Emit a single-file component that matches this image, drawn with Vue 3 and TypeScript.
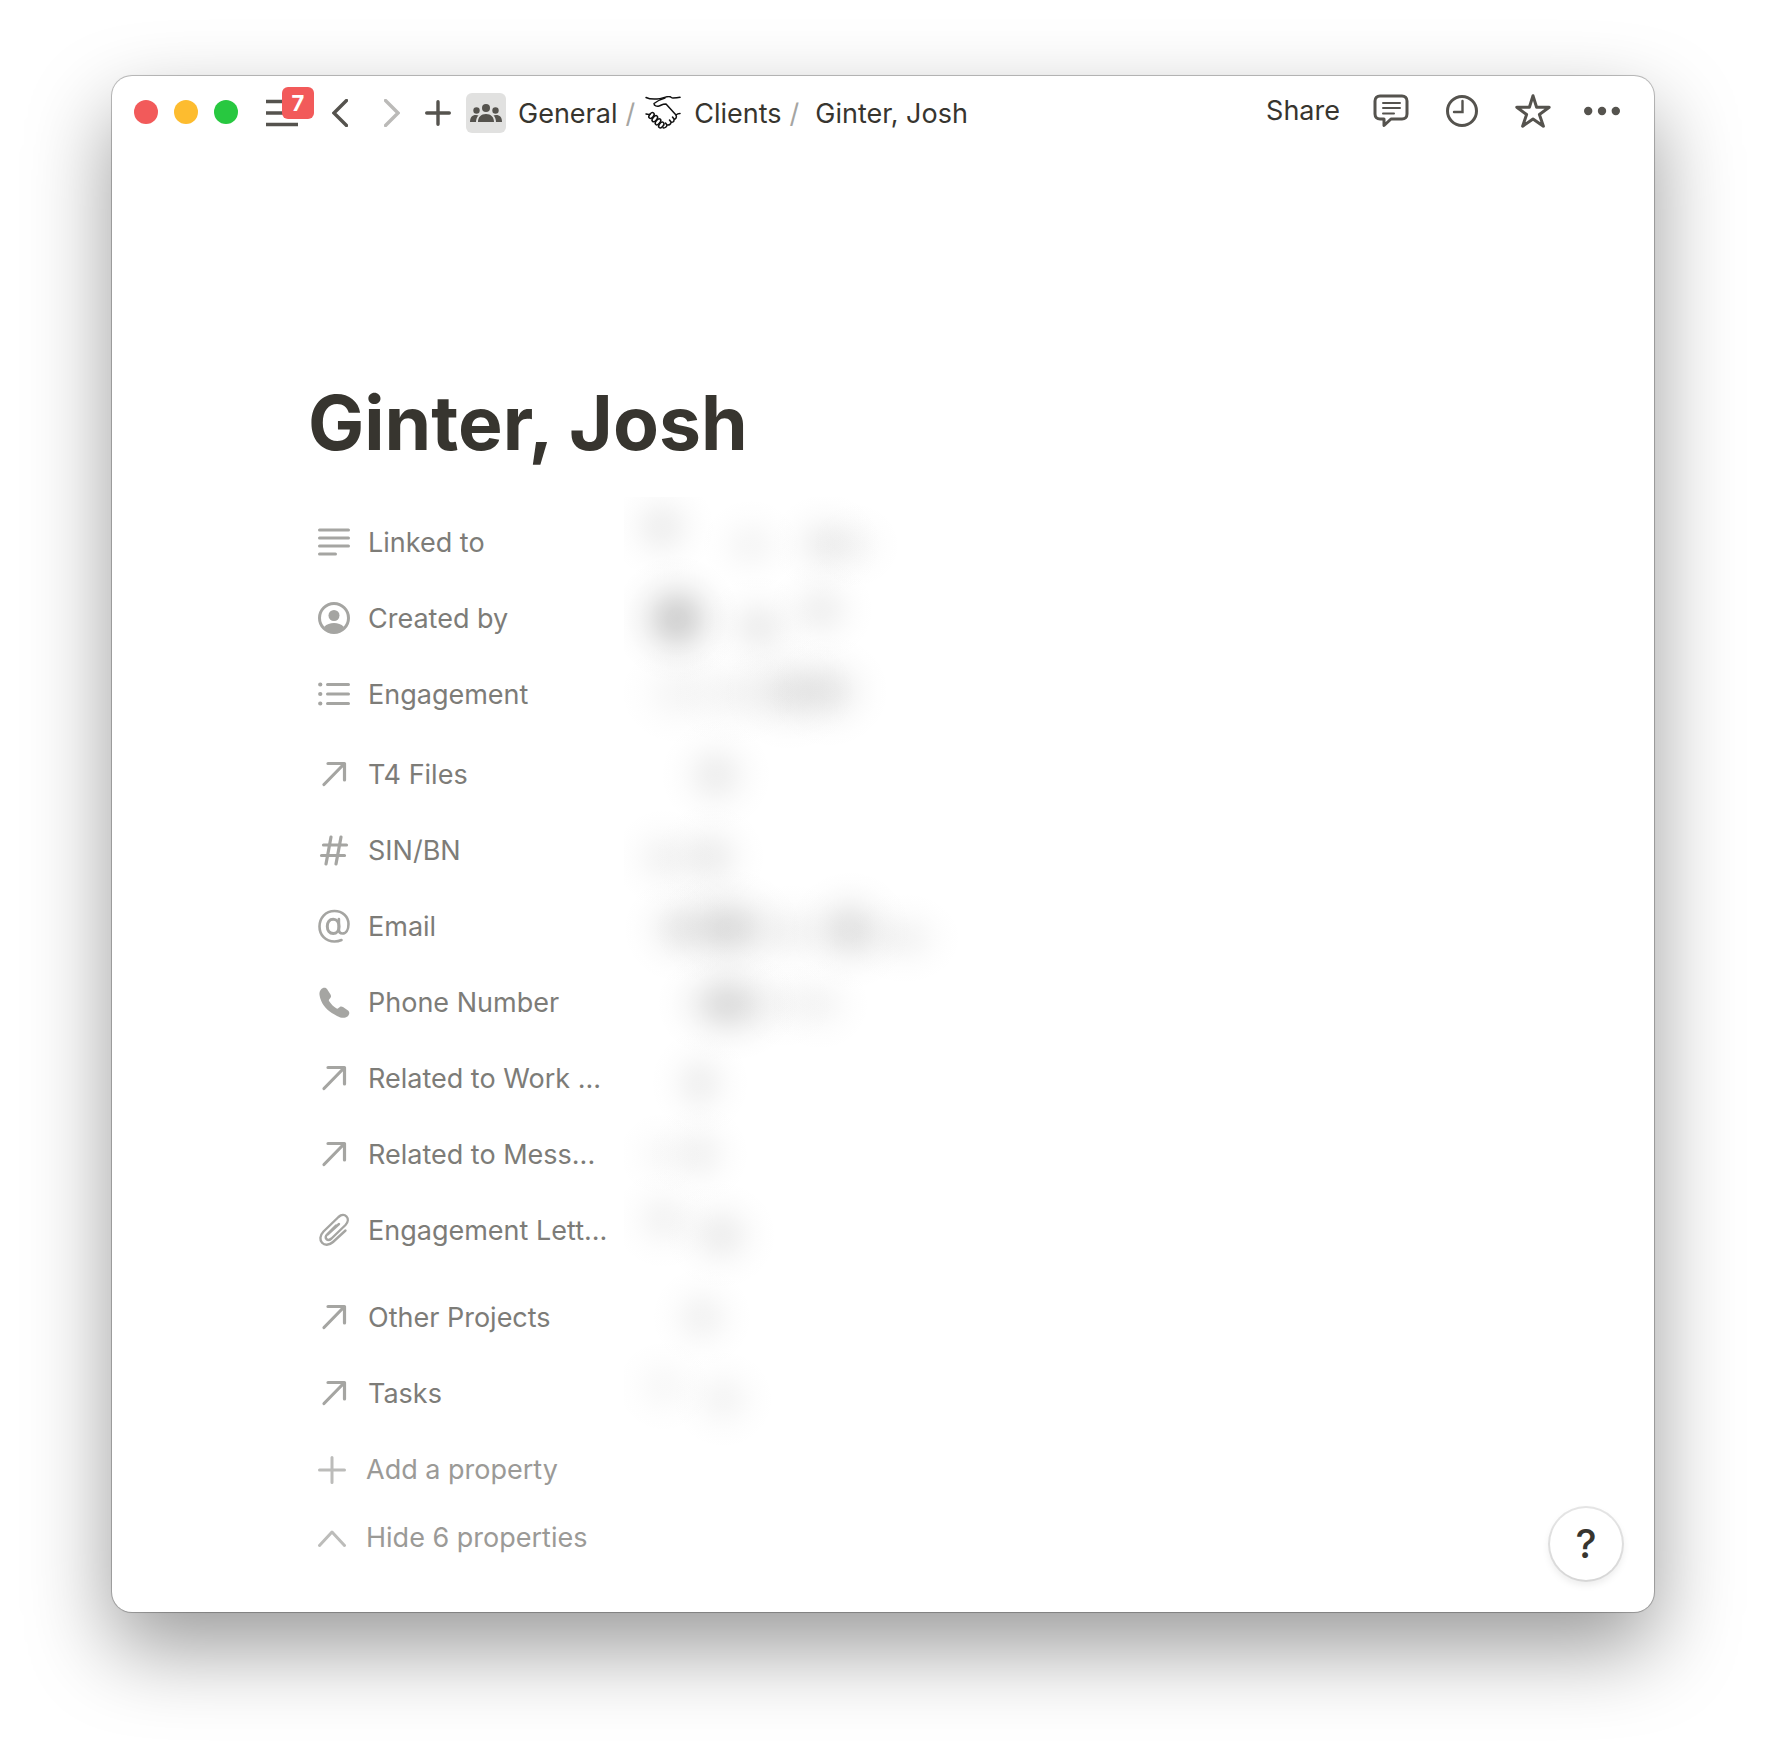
<script setup lang="ts">
type IconName = 'text' | 'person' | 'list' | 'relation' | 'number' | 'email' | 'phone' | 'file'

interface Property {
  label: string
  icon: IconName
  size?: 'tall' | 'taller'
}

interface Smudge {
  x: number
  y: number
  rx: number
  ry: number
  strength: number
}

const properties: Property[] = [
  { label: 'Linked to', icon: 'text' },
  { label: 'Created by', icon: 'person' },
  { label: 'Engagement', icon: 'list', size: 'tall' },
  { label: 'T4 Files', icon: 'relation' },
  { label: 'SIN/BN', icon: 'number' },
  { label: 'Email', icon: 'email' },
  { label: 'Phone Number', icon: 'phone' },
  { label: 'Related to Work ...', icon: 'relation' },
  { label: 'Related to Mess...', icon: 'relation' },
  { label: 'Engagement Lett...', icon: 'file', size: 'taller' },
  { label: 'Other Projects', icon: 'relation' },
  { label: 'Tasks', icon: 'relation' },
]

// Redacted values: soft patches, in the coordinates of the values column
const smudges: Smudge[] = [
  { x: 38, y: 30, rx: 56, ry: 56, strength: 0.07 },
  { x: 127, y: 48, rx: 56, ry: 52, strength: 0.04 },
  { x: 202, y: 47, rx: 58, ry: 54, strength: 0.07 },
  { x: 232, y: 48, rx: 52, ry: 50, strength: 0.03 },
  { x: 53, y: 122, rx: 64, ry: 64, strength: 0.22 },
  { x: 135, y: 130, rx: 58, ry: 54, strength: 0.075 },
  { x: 197, y: 113, rx: 56, ry: 54, strength: 0.065 },
  { x: 55, y: 196, rx: 66, ry: 58, strength: 0.04 },
  { x: 110, y: 197, rx: 70, ry: 58, strength: 0.045 },
  { x: 165, y: 195, rx: 68, ry: 60, strength: 0.1 },
  { x: 205, y: 194, rx: 62, ry: 58, strength: 0.09 },
  { x: 92, y: 278, rx: 58, ry: 58, strength: 0.075 },
  { x: 40, y: 361, rx: 56, ry: 54, strength: 0.05 },
  { x: 86, y: 360, rx: 58, ry: 56, strength: 0.075 },
  { x: 55, y: 432, rx: 58, ry: 56, strength: 0.08 },
  { x: 104, y: 431, rx: 74, ry: 60, strength: 0.16 },
  { x: 168, y: 436, rx: 64, ry: 54, strength: 0.05 },
  { x: 226, y: 433, rx: 62, ry: 60, strength: 0.13 },
  { x: 280, y: 441, rx: 62, ry: 50, strength: 0.05 },
  { x: 104, y: 507, rx: 72, ry: 58, strength: 0.16 },
  { x: 160, y: 507, rx: 58, ry: 52, strength: 0.03 },
  { x: 196, y: 507, rx: 56, ry: 52, strength: 0.04 },
  { x: 76, y: 586, rx: 52, ry: 56, strength: 0.065 },
  { x: 36, y: 657, rx: 50, ry: 50, strength: 0.025 },
  { x: 75, y: 657, rx: 54, ry: 54, strength: 0.055 },
  { x: 40, y: 722, rx: 56, ry: 54, strength: 0.05 },
  { x: 97, y: 738, rx: 58, ry: 56, strength: 0.075 },
  { x: 78, y: 820, rx: 54, ry: 54, strength: 0.055 },
  { x: 40, y: 889, rx: 56, ry: 54, strength: 0.03 },
  { x: 99, y: 902, rx: 56, ry: 54, strength: 0.045 },
]
</script>

<template>
  <div class="desktop">
    <main class="window">
      <header class="topbar">
        <div class="lights">
          <button class="light close" aria-label="Close"></button>
          <button class="light minimise" aria-label="Minimise"></button>
          <button class="light zoom" aria-label="Zoom"></button>
        </div>
        <div class="tools">
          <button class="menu" aria-label="Menu">
            <svg width="32" height="28" viewBox="0 0 32 28">
              <path d="M0 2.500h32M0 14h32M0 25.500h32" stroke="#55534e" stroke-width="3.500" />
            </svg>
            <span class="badge">7</span>
          </button>
          <button class="back" aria-label="Back">
            <svg width="16" height="28" viewBox="0 0 16 28" fill="none" stroke="#55534e" stroke-width="3.400" stroke-linecap="round">
              <path d="M14.500 1.500L2 14l12.500 12.500" />
            </svg>
          </button>
          <button class="forward" aria-label="Forward">
            <svg width="16" height="28" viewBox="0 0 16 28" fill="none" stroke="#bbbab8" stroke-width="3.400" stroke-linecap="round">
              <path d="M1.500 1.500L14 14L1.500 26.500" />
            </svg>
          </button>
          <button class="new" aria-label="New page">
            <svg width="26" height="26" viewBox="0 0 26 26" stroke="#55534e" stroke-width="3.400" stroke-linecap="round">
              <path d="M13 1.700v22.600M1.700 13h22.600" />
            </svg>
          </button>
        </div>
        <nav class="crumbs" aria-label="Breadcrumb">
          <span class="tile">
            <svg width="32" height="18" viewBox="0 0 32 18" fill="#55534e">
              <circle cx="16" cy="4" r="4" />
              <circle cx="6.500" cy="6.500" r="3.200" />
              <circle cx="25.500" cy="6.500" r="3.200" />
              <path d="M8 18c0-5 3-8 8-8s8 3 8 8zM0 18c0-4.500 2-7 6-7 1 0 1.800.2 2.500.5C6.800 13.200 6 15.400 6 18zM32 18c0-4.500-2-7-6-7-1 0-1.800.2-2.500.5 1.700 1.700 2.500 3.900 2.500 6.500z" />
            </svg>
          </span>
          <a class="general" href="#">General</a>
          <span class="slash">/</span>
          <svg class="shake" width="36" height="34" viewBox="0 0 36 34" fill="none" stroke="#111" stroke-width="1.500" stroke-linecap="round" stroke-linejoin="round">
            <path d="M1 1.500c3 1.500 7 1.800 11 1.500 5 0 8-2.500 12-2.500 2 0 2 1.500 4 1.500s4 0 7-.7" />
            <path d="M20 2c-4 1-8 3-11 5.500C9 10 12 10.500 14 10c2-.5 3-2 7-2l10 11M31 19c1-1 2-1.500 4-1.500" />
            <path d="M1 18c2 .5 3 .5 4 .3M31 19c1 2 0 4-2 4.500.3 2-1 3-3 2.800 0 2-2 3-4 2.500 0 2-2 3.500-4 3M26 26l-1.500-2M22 29l-1.500-2M29 23l-1.500-2" />
            <ellipse cx="6.500" cy="19.500" rx="2" ry="3.300" transform="rotate(40 6.500 19.500)" />
            <ellipse cx="9.800" cy="22.700" rx="2" ry="3.500" transform="rotate(40 9.800 22.700)" />
            <ellipse cx="13" cy="25.800" rx="2" ry="3.500" transform="rotate(40 13 25.800)" />
            <ellipse cx="16.300" cy="29" rx="2" ry="3.300" transform="rotate(40 16.300 29)" />
          </svg>
          <a class="clients" href="#">Clients</a>
          <span class="slash">/</span>
          <a class="current" href="#">Ginter, Josh</a>
        </nav>
        <div class="actions">
          <button class="share">Share</button>
          <button aria-label="Comments">
            <svg width="36" height="34" viewBox="0 0 36 34" fill="none" stroke="#55534e" stroke-width="3" stroke-linejoin="round">
              <path d="M7 2h22c3 0 5 2 5 5v13c0 3-2 5-5 5H18l-7 6.500V25H7c-3 0-5-2-5-5V7c0-3 2-5 5-5z" />
              <path d="M10 9h17M10 14h17M10 19.500h11" stroke-width="2" stroke-linecap="round" />
            </svg>
          </button>
          <button aria-label="Updates">
            <svg width="32" height="32" viewBox="0 0 32 32" fill="none" stroke="#55534e" stroke-width="3">
              <circle cx="16" cy="16" r="14.500" />
              <path d="M16.500 6v11H8" stroke-width="2.400" stroke-linecap="round" />
            </svg>
          </button>
          <button aria-label="Favourite">
            <svg width="36" height="34" viewBox="0 0 36 34" fill="none" stroke="#55534e" stroke-width="3" stroke-linejoin="round">
              <path d="M18 1.800l3.600 11.400h12.600l-9.800 7.300 4 11.700-10.400-7.200L7.600 32.200l4-11.700-9.800-7.300h12.600z" />
            </svg>
          </button>
          <button class="more" aria-label="More">
            <svg width="36" height="10" viewBox="0 0 36 10" fill="#55534e">
              <circle cx="4.200" cy="5" r="4.200" /><circle cx="18" cy="5" r="4.200" /><circle cx="31.800" cy="5" r="4.200" />
            </svg>
          </button>
        </div>
      </header>

      <article class="page">
        <h1>Ginter, Josh</h1>
        <div class="properties">
          <ul>
            <li v-for="p in properties" :key="p.label" :class="p.size">
              <svg class="icon" width="32" height="34" viewBox="0 0 32 34" fill="none" stroke="#a5a5a2" stroke-linecap="round" stroke-linejoin="round">
                <path v-if="p.icon === 'text'" d="M1.500 5h29M1.500 13h29M1.500 21h29M1.500 29h16" stroke-width="3" />
                <template v-else-if="p.icon === 'person'">
                  <circle cx="16" cy="17" r="14.500" stroke-width="3" />
                  <circle cx="16" cy="14.500" r="5.500" fill="#a5a5a2" stroke="none" />
                  <path d="M6 26c3-3 6-4 10-4s7 1 10 4c-6 7-14 7-20 0z" fill="#a5a5a2" stroke="none" />
                </template>
                <template v-else-if="p.icon === 'list'">
                  <path d="M9.500 7.500h21M9.500 17h21M9.500 26.500h21" stroke-width="3" />
                  <path d="M2.200 7.500h.1M2.200 17h.1M2.200 26.500h.1" stroke-width="4.200" />
                </template>
                <path v-else-if="p.icon === 'relation'" d="M10 6.500h16.500V23M26 7L6 27.500" stroke-width="3.200" />
                <path v-else-if="p.icon === 'number'" d="M13 4L8 31M23 4L18 31M5.500 12h23M3.500 22.500h23" stroke-width="3.200" />
                <g v-else-if="p.icon === 'email'" stroke-width="2.600">
                  <path d="M23.500 31c-2 .9-4.500 1.500-7 1.500C7.500 32.500 1.500 26 1.500 17.500S7.500 2 16.500 2c8 0 14 5.500 14 13 0 6-2.500 9.500-6 9.500-2.500 0-3.600-1.500-3.600-4V10" />
                  <path d="M21 17.500c0 4-2.300 7-5.800 7-3.600 0-5.900-2.800-5.900-7.200 0-4.300 2.300-7.100 5.900-7.100 3.500 0 5.800 2.900 5.800 7.300z" stroke-width="3" />
                </g>
                <path v-else-if="p.icon === 'phone'" d="M3 4.500C4.500 2.500 7.500 2 9 4l3.500 5.500c1 2 .5 3-1 4.500-.8.800-.9 1.400-.3 2.300 2 3 4 5 7 7 .9.600 1.600.5 2.300-.3 1.500-1.500 2.500-2 4.500-1l5 3.500c2 1.500 1.500 4.500-.5 6-3 2-7 2-13-2C9 25.500 4.500 20 2.500 14 1 9.500 1 7 3 4.500z" fill="#a5a5a2" stroke="none" />
                <path v-else d="M18 12.500L9.500 21c-4 4 0 8 4 4.500L27.500 12c6-6.500-1-13.500-7-8L5.500 18.500C-2.500 27 6.500 36.500 15 29L27.500 17.500M21 11L9.500 21.500" stroke-width="2.400" />
              </svg>
              <span>{{ p.label }}</span>
            </li>
          </ul>
          <svg class="values" width="340" height="960" viewBox="0 0 340 960" aria-hidden="true">
            <defs>
              <radialGradient id="soft">
                <stop offset="0" stop-color="#3c3c3c" />
                <stop offset="0.150" stop-color="#3c3c3c" stop-opacity="0.920" />
                <stop offset="0.300" stop-color="#3c3c3c" stop-opacity="0.700" />
                <stop offset="0.450" stop-color="#3c3c3c" stop-opacity="0.430" />
                <stop offset="0.600" stop-color="#3c3c3c" stop-opacity="0.220" />
                <stop offset="0.800" stop-color="#3c3c3c" stop-opacity="0.060" />
                <stop offset="1" stop-color="#3c3c3c" stop-opacity="0" />
              </radialGradient>
            </defs>
            <ellipse v-for="(s, i) in smudges" :key="i" :cx="s.x" :cy="s.y" :rx="s.rx" :ry="s.ry" :opacity="s.strength" fill="url(#soft)" />
          </svg>
        </div>
        <button class="extra">
          <svg width="28" height="28" viewBox="0 0 28 28" stroke="#bcbcba" stroke-width="3" stroke-linecap="round">
            <path d="M14 1.500v25M1.500 14h25" />
          </svg>
          Add a property
        </button>
        <button class="extra">
          <svg width="28" height="28" viewBox="0 0 28 28" fill="none" stroke="#bcbcba" stroke-width="3" stroke-linecap="round" stroke-linejoin="round">
            <path d="M1.500 21.500L14 8l12.500 13.500" />
          </svg>
          Hide 6 properties
        </button>
      </article>

      <button class="help" aria-label="Help">?</button>
    </main>
  </div>
</template>

<style>
body {
  background: #fff;
}
</style>

<style scoped>
.desktop {
  padding: 76px 112px 148px;
  overflow: hidden;
  font-family: Inter, 'Liberation Sans', sans-serif;
  font-size: 27px;
  line-height: 38px;
  color: #37352f;
}
button {
  display: flex;
  align-items: center;
  margin: 0;
  padding: 0;
  border: 0;
  background: none;
  font: inherit;
  color: inherit;
}
a {
  color: inherit;
  text-decoration: none;
}
svg {
  display: block;
  flex: none;
}
.window {
  position: relative;
  background: #fff;
  border-radius: 20px;
  box-shadow: 0 0 0 1px rgba(0, 0, 0, 0.2), 0 0 2px rgba(0, 0, 0, 0.2), 0 36px 84px rgba(0, 0, 0, 0.4);
}
.topbar {
  display: flex;
  align-items: center;
  height: 72px;
  padding: 0 34px 0 22px;
  white-space: nowrap;
}
.lights {
  display: flex;
  gap: 16px;
}
.light {
  width: 24px;
  height: 24px;
  border-radius: 50%;
}
.close {
  background: #f25a5a;
}
.minimise {
  background: #fdbc2f;
}
.zoom {
  background: #28c840;
}
.tools {
  display: flex;
  align-items: center;
  padding: 2px 0 0 28px;
}
.menu {
  position: relative;
}
.badge {
  position: absolute;
  left: 16px;
  top: -12px;
  width: 32px;
  height: 32px;
  border-radius: 6px;
  background: #f25a5a;
  color: #fff;
  font-size: 22px;
  font-weight: 700;
  line-height: 32px;
  text-align: center;
}
.back {
  margin-left: 34px;
}
.forward {
  margin-left: 36px;
}
.new {
  margin-left: 25px;
}
.crumbs {
  display: flex;
  align-items: center;
  padding: 2px 0 0 15px;
}
.crumbs a,
.slash {
  padding-top: 1px;
}
.tile {
  display: flex;
  align-items: center;
  justify-content: center;
  width: 40px;
  height: 40px;
  border-radius: 6px;
  background: #e1e1e0;
}
.general {
  margin-left: 12px;
}
.slash {
  margin-left: 8px;
  color: #a5a5a2;
}
.shake {
  margin-left: 10px;
}
.clients {
  margin-left: 13px;
}
.current {
  margin-left: 16px;
}
.actions {
  display: flex;
  align-items: center;
  gap: 37px;
  margin-left: auto;
  padding-bottom: 2px;
}
.share {
  margin-right: -4px;
}
.more {
  margin-left: -4px;
}
.page {
  padding: 227px 196px 41px;
}
h1 {
  margin: 0;
  font-size: 75px;
  line-height: 96px;
  font-weight: 700;
}
.properties {
  position: relative;
  margin-top: 37px;
}
ul {
  display: flex;
  flex-direction: column;
  gap: 8px;
  margin: 0;
  padding: 0 0 0 10px;
  list-style: none;
}
li {
  display: flex;
  align-items: flex-start;
  gap: 18px;
  height: 68px;
  line-height: 70px;
  color: #7d7c78;
}
.icon {
  margin-top: 17px;
}
.tall {
  height: 72px;
}
.taller {
  height: 79px;
}
.values {
  position: absolute;
  left: 316px;
  top: -11px;
}
.extra {
  height: 68px;
  padding: 1px 0 0 10px;
  gap: 20px;
  color: #9b9a97;
}
.properties + .extra {
  margin-top: 8px;
}
.help {
  position: absolute;
  right: 32px;
  bottom: 32px;
  justify-content: center;
  width: 72px;
  height: 72px;
  border-radius: 50%;
  background: #fff;
  box-shadow: 0 0 0 2px rgba(15, 15, 15, 0.1), 0 4px 8px rgba(15, 15, 15, 0.1);
  font-size: 40px;
  font-weight: 500;
}
</style>
